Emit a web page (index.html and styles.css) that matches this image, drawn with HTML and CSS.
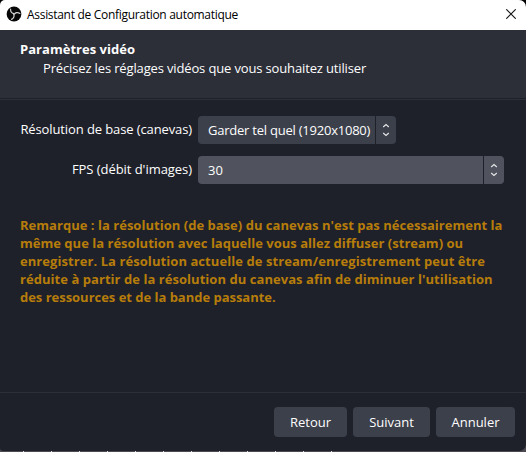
FILE: index.html
```html
<!DOCTYPE html>
<html lang="fr">
<head>
<meta charset="utf-8">
<title>Assistant de Configuration automatique</title>
<link rel="stylesheet" href="styles.css">
</head>
<body>
<main class="window">
  <div class="titlebar">
    <svg class="logo" viewBox="0 0 16 16"><circle cx="8" cy="8" r="7.4" fill="#080808"/><g fill="none" stroke="#d4d4d4" stroke-width="1.2" stroke-linecap="round"><path d="M4.6 3.2C4.4 5.8 6 7.6 8 7.6"/><path d="M4.6 3.2C4.4 5.8 6 7.6 8 7.6" transform="rotate(120 8 8)"/><path d="M4.6 3.2C4.4 5.8 6 7.6 8 7.6" transform="rotate(240 8 8)"/></g></svg>
    <span class="caption">Assistant de Configuration automatique</span>
    <svg class="close" viewBox="0 0 10 10"><path d="M.3.3l9.4 9.4M9.7.3L.3 9.7" fill="none" stroke="#111" stroke-width="1.1"/></svg>
  </div>
  <header class="header">
    <h1>Paramètres vidéo</h1>
    <p>Précisez les réglages vidéos que vous souhaitez utiliser</p>
  </header>
  <section class="content">
    <div class="form">
      <label class="label-base">Résolution de base (canevas)</label>
      <div class="combo combo-base"><span class="value">Garder tel quel (1920x1080)</span><span class="arrows"><svg viewBox="0 0 8 14"><path d="M1.2 4L4 1.5 6.8 4M1.2 10L4 12.5 6.8 10"/></svg></span></div>
      <label class="label-fps">FPS (débit d'images)</label>
      <div class="combo combo-fps"><span class="value">30</span><span class="arrows"><svg viewBox="0 0 8 14"><path d="M1.2 4L4 1.5 6.8 4M1.2 10L4 12.5 6.8 10"/></svg></span></div>
    </div>
    <p class="note"><span class="n1">Remarque : la résolution (de base) du canevas n'est pas nécessairement la</span> <span class="n2">même que la résolution avec laquelle vous allez diffuser (stream) ou</span> <span class="n3">enregistrer. La résolution actuelle de stream/enregistrement peut être</span> <span class="n4">réduite à partir de la résolution du canevas afin de diminuer l'utilisation</span> <span class="n5">des ressources et de la bande passante.</span></p>
  </section>
  <footer class="footer">
    <button class="back">Retour</button>
    <button class="next">Suivant</button>
    <button class="cancel">Annuler</button>
  </footer>
</main>
</body>
</html>
```

FILE: styles.css
```css
* { box-sizing: border-box; }
body {
  margin: 0;
  height: 452px;
  overflow: hidden;
  background:
    repeating-linear-gradient(90deg, transparent 0 23px, #ddd 23px 24px, transparent 24px 28px) 0 451px / 336px 1px no-repeat,
    linear-gradient(#000 0 200px, #4c4a50 200px);
  font: 13px/18px "Open Sans", "Noto Sans", sans-serif;
  color: #fefefe;
}
.window {
  display: flex;
  flex-direction: column;
  height: 451px;
  border-radius: 5px 7px 7px 3px;
  overflow: hidden;
  background: #1f212a;
}
.titlebar {
  display: flex;
  align-items: center;
  height: 30px;
  padding: 0 10px 2px 6px;
  background: #fff;
  color: #000;
  font-size: 12px;
}
.logo { width: 16px; height: 16px; margin-right: 5px; }
.caption { flex: 1; padding-top: 2px; letter-spacing: -.3px; white-space: nowrap; }
.close { width: 10px; height: 10px; }
.header {
  height: 68px;
  padding: 10px 20px;
  background: #2c2e38;
}
h1 { margin: 0; font-size: 13px; line-height: 18px; font-weight: 700; letter-spacing: .03px; }
.header p { margin: 1px 0 0 23px; letter-spacing: -.145px; white-space: nowrap; }
.content {
  flex: 1;
  margin-top: 1px;
  padding: 16px 22px 0 20px;
  border-top: 1px solid #2c2e38;
}
.form {
  display: grid;
  grid-template-columns: 172px 306px;
  grid-template-rows: 28px 28px;
  gap: 12px 6px;
}
.form label { justify-self: end; line-height: 27px; white-space: nowrap; }
.label-base { letter-spacing: -.11px; }
.label-fps { letter-spacing: -.05px; }
.combo {
  display: flex;
  justify-content: space-between;
  height: 28px;
  border-radius: 4px;
  background: #3c404b;
}
.combo-base { width: 198px; }
.combo-base .value { letter-spacing: -.23px; }
.combo-fps { background: #50535d; }
.value { padding-left: 10px; line-height: 29px; white-space: nowrap; }
.arrows {
  display: flex;
  flex: none;
  align-items: center;
  justify-content: center;
  width: 21px;
  border-left: 1px solid #1f212a;
}
.arrows svg { width: 8px; height: 14px; fill: none; stroke: #e8e8ea; stroke-width: 1.1; }
.note { margin: 32px 0 0; color: #b77d0b; font-weight: 700; }
.note span { display: block; width: max-content; white-space: nowrap; }
.n1 { letter-spacing: .025px; }
.n2 { letter-spacing: .015px; }
.n3 { letter-spacing: .07px; }
.n4 { letter-spacing: .05px; }
.n5 { letter-spacing: -.02px; }
.footer {
  display: flex;
  justify-content: flex-end;
  gap: 6px;
  height: 59px;
  padding: 14px 11px 0 0;
  border-top: 1px solid #2c2e38;
}
button {
  height: 30px;
  padding: 0;
  border: 0;
  border-radius: 4px;
  background: #3c404b;
  color: #fefefe;
  font: inherit;
}
.back { width: 73px; }
.next { width: 77px; }
.cancel { width: 79px; }
```
